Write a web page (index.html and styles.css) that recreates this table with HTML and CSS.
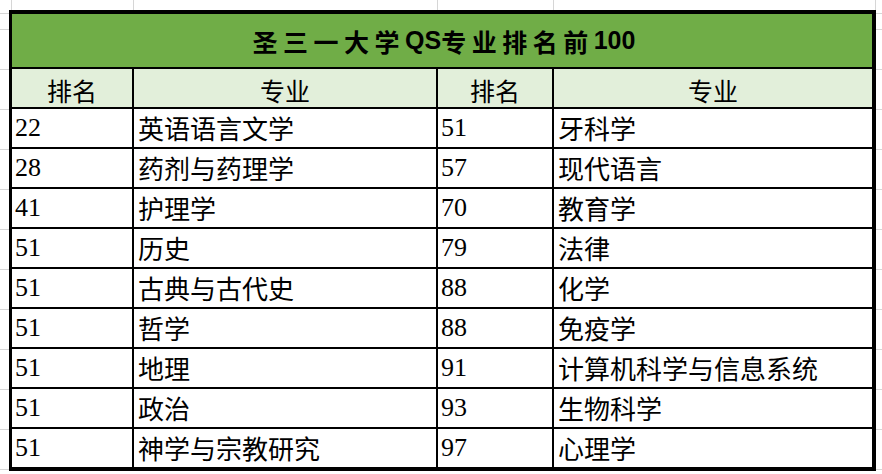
FILE: index.html
```html
<!DOCTYPE html>
<html lang="zh-CN">
<head>
<meta charset="utf-8">
<title>圣三一大学QS专业排名前100</title>
<link rel="stylesheet" href="styles.css">
</head>
<body>
<div class="sheet">
  <div class="rank-table">
    <div class="title"><span class="cjk">圣三一大学</span>QS<span class="cjk">专业排名前</span>100</div>
    <div class="head">排名</div><div class="head">专业</div><div class="head">排名</div><div class="head">专业</div>
    <div class="num">22</div><div class="txt">英语语言文学</div><div class="num">51</div><div class="txt">牙科学</div>
    <div class="num">28</div><div class="txt">药剂与药理学</div><div class="num">57</div><div class="txt">现代语言</div>
    <div class="num">41</div><div class="txt">护理学</div><div class="num">70</div><div class="txt">教育学</div>
    <div class="num">51</div><div class="txt">历史</div><div class="num">79</div><div class="txt">法律</div>
    <div class="num">51</div><div class="txt">古典与古代史</div><div class="num">88</div><div class="txt">化学</div>
    <div class="num">51</div><div class="txt">哲学</div><div class="num">88</div><div class="txt">免疫学</div>
    <div class="num">51</div><div class="txt">地理</div><div class="num">91</div><div class="txt">计算机科学与信息系统</div>
    <div class="num">51</div><div class="txt">政治</div><div class="num">93</div><div class="txt">生物科学</div>
    <div class="num">51</div><div class="txt">神学与宗教研究</div><div class="num">97</div><div class="txt">心理学</div>
  </div>
</div>
</body>
</html>
```
FILE: styles.css
```css
html, body {
  margin: 0;
  padding: 0;
  background: #ffffff;
}

.sheet {
  width: 882px;
  height: 474px;
  overflow: hidden;
  padding: 10px 0 0 9px;
  box-sizing: border-box;
  background-color: #ffffff;
  background-image:
    linear-gradient(to right,
      transparent 0 11px, #d6d6d6 11px 12px,
      transparent 12px 133px, #d6d6d6 133px 134px,
      transparent 134px 437px, #d6d6d6 437px 438px,
      transparent 438px 553px, #d6d6d6 553px 554px,
      transparent 554px 875px, #d6d6d6 875px 876px,
      transparent 876px),
    linear-gradient(to bottom, transparent 0 13px, #d6d6d6 13px 14px, transparent 14px),
    linear-gradient(to bottom, #d6d6d6 0 1px, transparent 1px);
  background-size: 100% 10px, 100% 100%, 100% 40px;
  background-position: 0 0, 0 0, 0 69px;
  background-repeat: no-repeat, no-repeat, repeat-y;
}

.rank-table {
  display: grid;
  width: fit-content;
  grid-template-columns: 120px 302px 114px 318px;
  grid-template-rows: 53px 38px repeat(9, 38px);
  gap: 2px;
  background: #000000;
  border-style: solid;
  border-color: #000000;
  border-width: 4px 4px 4px 3px;
  color: #000000;
}

.title {
  grid-column: 1 / -1;
  background: #70ad47;
  display: flex;
  align-items: center;
  justify-content: center;
  font-family: "Liberation Sans", "Noto Sans CJK SC", sans-serif;
  font-weight: bold;
  font-size: 25px;
  padding-left: 4px;
}

.title .cjk {
  font-family: "Noto Sans CJK SC", sans-serif;
  letter-spacing: 5.5px;
}

.head {
  background: #e2efda;
  display: flex;
  align-items: center;
  justify-content: center;
  padding-top: 4px;
  font-family: "Noto Sans CJK SC", sans-serif;
  font-size: 25px;
  line-height: 1;
}

.num, .txt {
  background: #ffffff;
  display: flex;
  align-items: center;
  padding-left: 3px;
  font-size: 26px;
  line-height: 1;
  white-space: nowrap;
}

.num {
  font-family: "Liberation Serif", serif;
}

.txt {
  font-family: "Noto Sans CJK SC", sans-serif;
  padding-left: 4px;
}
```
